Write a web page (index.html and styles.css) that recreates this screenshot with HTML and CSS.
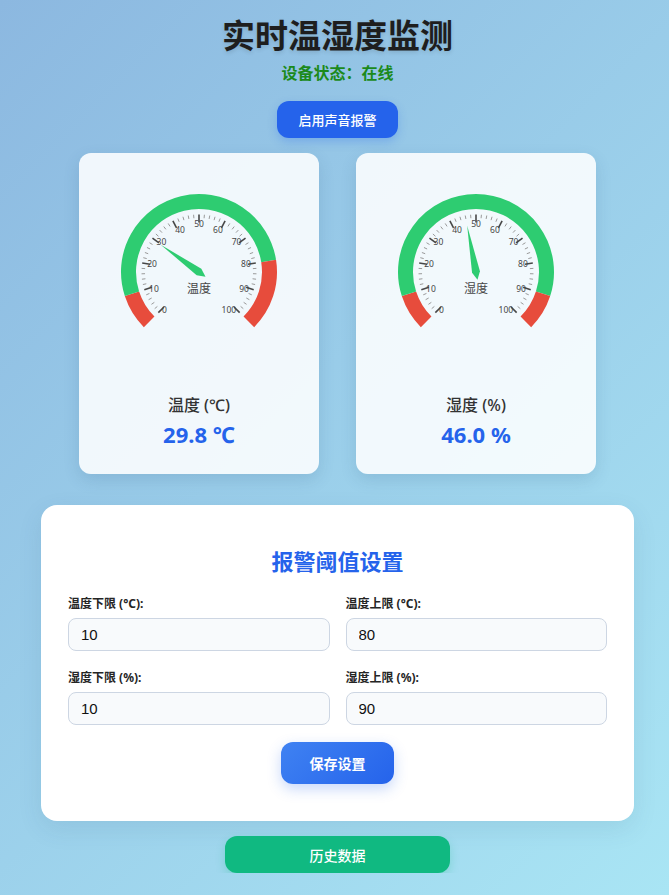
FILE: index.html
```html
<!DOCTYPE html>
<html lang="zh-CN">
<head>
<meta charset="utf-8">
<title>实时温湿度监测</title>
<link rel="stylesheet" href="styles.css">
</head>
<body>
<div class="page">
  <h1 class="title">实时温湿度监测</h1>
  <div class="status">设备状态：在线</div>
  <button class="btn btn-sound" type="button">启用声音报警</button>

  <div class="gauges">
    <div class="card">
      <svg class="gauge" viewBox="0 0 200 200" data-value="29.8" data-low="0.1" data-high="0.8" data-title="温度"></svg>
      <div class="card-label">温度 (℃)</div>
      <div class="card-value">29.8 ℃</div>
    </div>
    <div class="card">
      <svg class="gauge" viewBox="0 0 200 200" data-value="46.0" data-low="0.1" data-high="0.9" data-title="湿度"></svg>
      <div class="card-label">湿度 (%)</div>
      <div class="card-value">46.0 %</div>
    </div>
  </div>

  <div class="panel">
    <h2 class="panel-title">报警阈值设置</h2>
    <div class="form-grid">
      <div class="field">
        <label class="field-label">温度下限 (°C):</label>
        <input class="field-input" type="text" value="10">
      </div>
      <div class="field">
        <label class="field-label">温度上限 (°C):</label>
        <input class="field-input" type="text" value="80">
      </div>
      <div class="field">
        <label class="field-label">湿度下限 (%):</label>
        <input class="field-input" type="text" value="10">
      </div>
      <div class="field">
        <label class="field-label">湿度上限 (%):</label>
        <input class="field-input" type="text" value="90">
      </div>
    </div>
    <button class="btn btn-save" type="button">保存设置</button>
  </div>

  <button class="btn btn-history" type="button">历史数据</button>
</div>
<script src="script.js"></script>
</body>
</html>
```

FILE: styles.css
```css
html {
  min-height: 100%;
  background: linear-gradient(135deg, #8cb8e0 0%, #a9e5f4 100%);
}

body {
  margin: 0;
  font-family: "Noto Sans", "Noto Sans CJK SC", sans-serif;
  color: #333;
}

.page {
  padding: 14px 35px 0 41px;
  display: flex;
  flex-direction: column;
  align-items: center;
}

.title {
  margin: 0;
  font-family: "Noto Sans CJK SC", sans-serif;
  font-size: 33px;
  line-height: 40px;
  font-weight: 700;
  color: #1e1e1e;
  text-shadow: 0 2px 4px rgba(0, 0, 0, 0.12);
}

.status {
  margin-top: 7px;
  font-family: "Noto Sans CJK SC", sans-serif;
  font-size: 16px;
  line-height: 22px;
  font-weight: 700;
  color: #1b8a1b;
}

.btn {
  border: none;
  padding: 0;
  font-family: "Noto Sans", "Noto Sans CJK SC", sans-serif;
  color: #fff;
  cursor: pointer;
}

.btn-sound {
  margin-top: 18px;
  width: 121px;
  height: 37px;
  border-radius: 12px;
  background: #2563eb;
  font-size: 13px;
  font-weight: 500;
  box-shadow: 0 4px 10px rgba(37, 99, 235, 0.25);
}

.gauges {
  margin-top: 15px;
  display: flex;
  gap: 37px;
}

.card {
  width: 240px;
  height: 321px;
  box-sizing: border-box;
  padding: 19px 20px 0;
  background: rgba(255, 255, 255, 0.87);
  border-radius: 12px;
  box-shadow: 0 6px 16px rgba(40, 80, 120, 0.15);
  text-align: center;
}

.gauge {
  display: block;
  width: 200px;
  height: 200px;
}

.card-label {
  margin-top: 21px;
  font-size: 16px;
  line-height: 24px;
  font-weight: 500;
  color: #333;
}

.card-value {
  margin-top: 2px;
  font-size: 22px;
  line-height: 30px;
  font-weight: 700;
  color: #2563eb;
}

.panel {
  margin-top: 31px;
  width: 593px;
  box-sizing: border-box;
  padding: 27px;
  background: #fff;
  border-radius: 16px;
  box-shadow: 0 8px 24px rgba(40, 80, 120, 0.1);
  display: flex;
  flex-direction: column;
  align-items: center;
}

.panel-title {
  margin: 14px 0 20px;
  font-size: 22px;
  line-height: 30px;
  font-weight: 700;
  color: #2563eb;
}

.form-grid {
  width: 100%;
  display: grid;
  grid-template-columns: 1fr 1fr;
  column-gap: 16px;
  row-gap: 19px;
}

.field {
  display: flex;
  flex-direction: column;
}

.field-label {
  margin-bottom: 6px;
  font-size: 12px;
  line-height: 16px;
  font-weight: 700;
  color: #252525;
}

.field-input {
  height: 33px;
  box-sizing: border-box;
  padding: 0 12px;
  border: 1px solid #cdd6e3;
  border-radius: 8px;
  background: #f8fafc;
  font-family: "Liberation Sans", Arial, sans-serif;
  font-size: 15px;
  color: #111;
  outline: none;
}

.btn-save {
  margin-top: 17px;
  margin-bottom: 10px;
  width: 113px;
  height: 42px;
  border-radius: 12px;
  background: linear-gradient(135deg, #3f82f2 0%, #2563eb 100%);
  font-size: 14px;
  font-weight: 700;
  box-shadow: 0 5px 14px rgba(37, 99, 235, 0.25);
}

.btn-history {
  margin-top: 15px;
  width: 225px;
  height: 37px;
  border-radius: 12px;
  background: #10b981;
  font-size: 14px;
  font-weight: 500;
  box-shadow: 0 4px 10px rgba(16, 185, 129, 0.25);
}

.gauge-label {
  font-family: "Noto Sans", "Noto Sans CJK SC", sans-serif;
  font-size: 8.5px;
  fill: #464646;
}

.gauge-title {
  font-family: "Noto Sans CJK SC", sans-serif;
  font-size: 12px;
  fill: #464646;
}
```

FILE: script.js
```js
(function () {
  var C = 100;
  var GREEN = '#2ecc71';
  var RED = '#e74c3c';

  function rad(d) { return d * Math.PI / 180; }
  function pt(r, deg) {
    var a = rad(deg);
    return [C + r * Math.cos(a), C - r * Math.sin(a)];
  }
  function ang(f) { return 225 - 270 * f; }
  function n(x) { return x.toFixed(2); }

  function arc(r, f0, f1, color, w) {
    var p0 = pt(r, ang(f0));
    var p1 = pt(r, ang(f1));
    var large = (f1 - f0) * 270 > 180 ? 1 : 0;
    return '<path d="M' + n(p0[0]) + ' ' + n(p0[1]) + ' A' + r + ' ' + r + ' 0 ' + large + ' 1 ' +
      n(p1[0]) + ' ' + n(p1[1]) + '" fill="none" stroke="' + color + '" stroke-width="' + w + '"/>';
  }

  function line(r0, r1, deg, color, w) {
    var a = pt(r0, deg), b = pt(r1, deg);
    return '<line x1="' + n(a[0]) + '" y1="' + n(a[1]) + '" x2="' + n(b[0]) + '" y2="' + n(b[1]) +
      '" stroke="' + color + '" stroke-width="' + w + '"/>';
  }

  var gauges = document.querySelectorAll('svg.gauge');
  Array.prototype.forEach.call(gauges, function (svg) {
    var v = parseFloat(svg.getAttribute('data-value'));
    var lo = parseFloat(svg.getAttribute('data-low'));
    var hi = parseFloat(svg.getAttribute('data-high'));
    var title = svg.getAttribute('data-title');
    var s = '';

    s += arc(70.5, 0, lo, RED, 15);
    s += arc(70.5, lo, hi, GREEN, 15);
    s += arc(70.5, hi, 1, RED, 15);

    for (var i = 0; i <= 50; i++) {
      var d = ang(i / 50);
      if (i % 5 === 0) {
        s += line(57.5, 49.5, d, '#474747', 1.6);
      } else {
        s += line(57.5, 54, d, '#9a9a9a', 1);
      }
    }

    for (var k = 0; k <= 10; k++) {
      var dd = ang(k / 10);
      var ux = Math.cos(rad(dd));
      var uy = -Math.sin(rad(dd));
      var p = pt(52.5, dd);
      var anchor = ux < -0.4 ? 'start' : (ux > 0.4 ? 'end' : 'middle');
      var y = p[1];
      if (uy < -0.8) { y += 4; }
      else if (uy > 0.8) { y -= 4; }
      s += '<text class="gauge-label" x="' + n(p[0]) + '" y="' + n(y) +
        '" text-anchor="' + anchor + '" dominant-baseline="central">' + (k * 10) + '</text>';
    }

    s += '<text class="gauge-title" x="100" y="115.5" text-anchor="middle" dominant-baseline="central">' + title + '</text>';

    var th = rad(ang(v / 100));
    var w = 4, len = 47;
    var tx = C + Math.cos(th) * len, ty = C - Math.sin(th) * len;
    var bx = C - Math.cos(th) * w * 2, by = C + Math.sin(th) * w * 2;
    var px = -Math.sin(th) * w, py = -Math.cos(th) * w;
    s += '<path d="M' + n(bx) + ' ' + n(by) + ' L' + n(C + px) + ' ' + n(C + py) + ' L' + n(tx) + ' ' + n(ty) +
      ' L' + n(C - px) + ' ' + n(C - py) + ' Z" fill="' + GREEN + '"/>';

    svg.innerHTML = s;
  });
})();
```
